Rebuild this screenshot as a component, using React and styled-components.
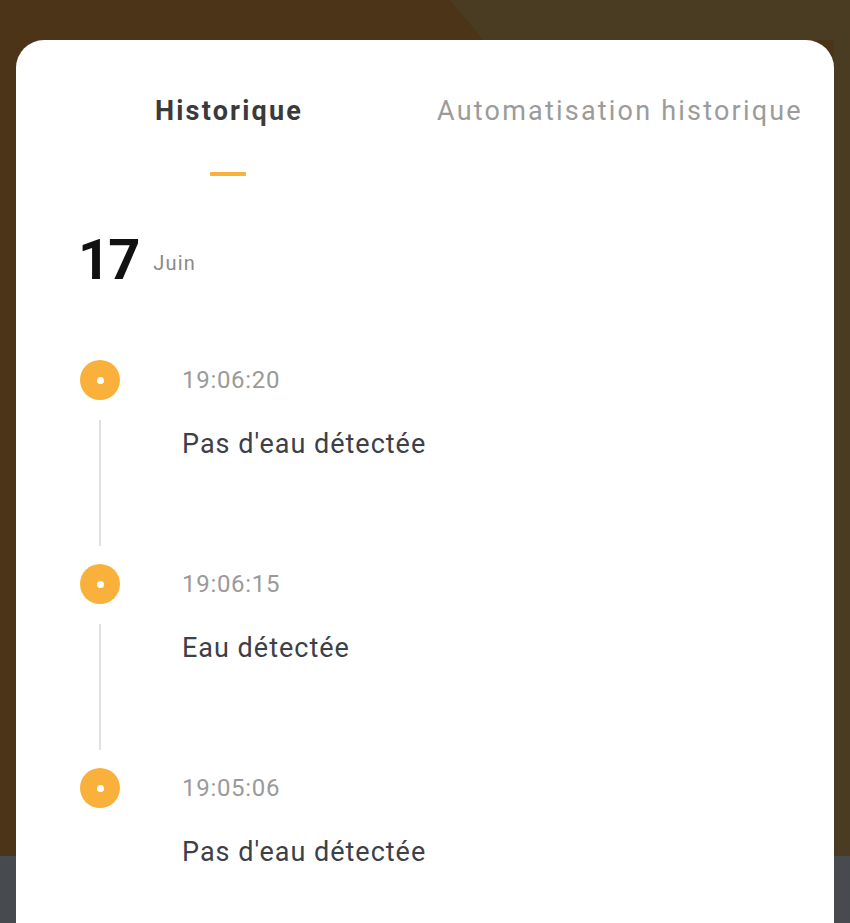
import React from "react";
import styled, { createGlobalStyle } from "styled-components";

const Global = createGlobalStyle`
  html, body { margin: 0; padding: 0; }
  body {
    background: #4b3418;
    font-family: Roboto, "Noto Sans", "Liberation Sans", sans-serif;
    overflow: hidden;
  }
`;

const Page = styled.div`
  position: relative;
  height: 923px;
  padding: 40px 16px 0;
  box-sizing: border-box;
  overflow: hidden;
`;

const Backdrop = styled.div`
  position: absolute;
  inset: 0;
  background: #4a3c22;
  clip-path: polygon(450px 0, 100% 0, 100% 100%, 834px 100%, 834px 40px, 483px 40px);
`;

const BottomBar = styled.div`
  position: absolute;
  left: 0;
  right: 0;
  bottom: 0;
  height: 67px;
  background: #474b50;
`;

const Sheet = styled.div`
  position: relative;
  z-index: 1;
  background: #ffffff;
  border-radius: 28px 28px 0 0;
  height: 900px;
`;

const Tabs = styled.div`
  display: flex;
  gap: 134px;
  padding: 53px 0 0 139px;
`;

const Tab = styled.div`
  display: flex;
  flex-direction: column;
  align-items: center;
  font-size: 27px;
  line-height: 36px;
  letter-spacing: 2.2px;
  white-space: nowrap;
  font-weight: ${(p) => (p.$active ? 700 : 400)};
  color: ${(p) => (p.$active ? "#3a3a3c" : "#9b9b9b")};
`;

const Indicator = styled.div`
  width: 36px;
  height: 4px;
  margin-top: 43px;
  margin-right: 2px;
  background: #f8b13a;
  border-radius: 1px;
`;

const DateRow = styled.div`
  display: flex;
  align-items: flex-end;
  gap: 15px;
  padding: 56px 0 0 62px;
`;

const Day = styled.div`
  font-size: 56px;
  line-height: 1;
  letter-spacing: -2px;
  font-weight: 700;
  color: #111;
`;

const Month = styled.div`
  font-size: 20px;
  line-height: 1;
  letter-spacing: 1.2px;
  color: #8a8a8a;
  margin-bottom: 15px;
`;

const Timeline = styled.div`
  display: flex;
  flex-direction: column;
  padding: 72px 0 0 64px;
`;

const Item = styled.div`
  display: grid;
  grid-template-columns: 40px 1fr;
  column-gap: 62px;
  height: 204px;
`;

const Rail = styled.div`
  display: flex;
  flex-direction: column;
  align-items: center;
`;

const Dot = styled.div`
  width: 40px;
  height: 40px;
  border-radius: 50%;
  background: #f9b13b;
  display: flex;
  align-items: center;
  justify-content: center;
  &::after {
    content: "";
    width: 7px;
    height: 7px;
    border-radius: 50%;
    background: #fff;
  }
`;

const Line = styled.div`
  width: 2px;
  height: 126px;
  margin-top: 20px;
  background: #e0e0e0;
  visibility: ${(p) => (p.$hidden ? "hidden" : "visible")};
`;

const Body = styled.div`
  display: flex;
  flex-direction: column;
  padding-top: 6px;
`;

const Time = styled.div`
  font-size: 24px;
  line-height: 28px;
  letter-spacing: 0.7px;
  color: #9a9a9a;
`;

const Event = styled.div`
  font-size: 27px;
  line-height: 32px;
  letter-spacing: 1px;
  color: #3c4048;
  margin-top: 34px;
`;

const events = [
  { time: "19:06:20", text: "Pas d'eau détectée" },
  { time: "19:06:15", text: "Eau détectée" },
  { time: "19:05:06", text: "Pas d'eau détectée" },
];

export default function App() {
  return (
    <>
      <Global />
      <Page>
        <Backdrop />
        <BottomBar />
        <Sheet>
          <Tabs>
            <Tab $active>
              Historique
              <Indicator />
            </Tab>
            <Tab>Automatisation historique</Tab>
          </Tabs>
          <DateRow>
            <Day>17</Day>
            <Month>Juin</Month>
          </DateRow>
          <Timeline>
            {events.map((e, i) => (
              <Item key={i}>
                <Rail>
                  <Dot />
                  <Line $hidden={i === events.length - 1} />
                </Rail>
                <Body>
                  <Time>{e.time}</Time>
                  <Event>{e.text}</Event>
                </Body>
              </Item>
            ))}
          </Timeline>
        </Sheet>
      </Page>
    </>
  );
}
